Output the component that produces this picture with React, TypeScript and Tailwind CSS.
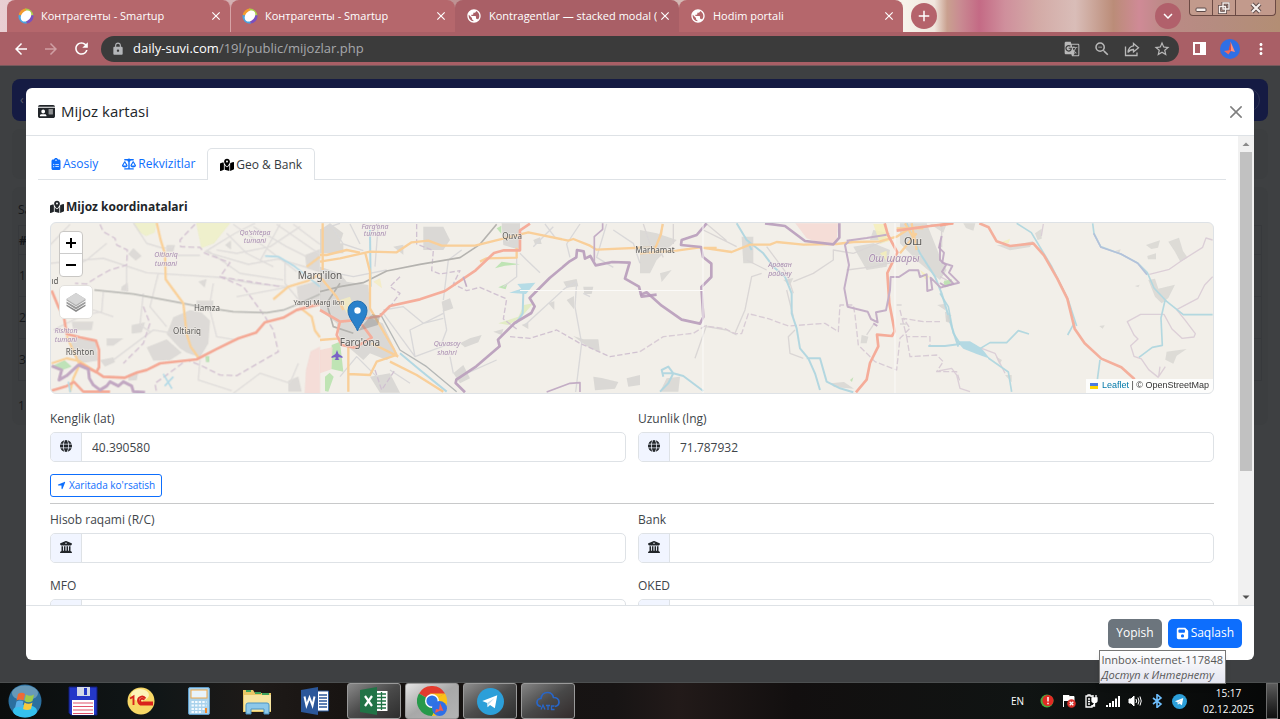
import type { ReactNode } from 'react'
import {
  FaBuildingColumns,
  FaClipboardList,
  FaFloppyDisk,
  FaGlobe,
  FaIdCard,
  FaLocationArrow,
  FaMapLocationDot,
  FaScaleBalanced,
} from 'react-icons/fa6'
import {
  MdAdd,
  MdArrowBack,
  MdArrowForward,
  MdClose,
  MdGTranslate,
  MdKeyboardArrowDown,
  MdLock,
  MdMoreVert,
  MdOutlineZoomOut,
  MdPublic,
  MdRefresh,
  MdStarBorder,
} from 'react-icons/md'

/* ---------- Browser chrome ---------- */

const browserTabs = [
  { title: 'Контрагенты - Smartup', icon: 'smartup', active: false },
  { title: 'Контрагенты - Smartup', icon: 'smartup', active: false },
  { title: 'Kontragentlar — stacked modal (', icon: 'globe', active: true },
  { title: 'Hodim portali', icon: 'globe', active: false },
]

function SmartupIcon() {
  return (
    <svg viewBox="0 0 16 16" className="size-4 shrink-0">
      <path d="M8 .5A7.500 7.500 0 0 0 .8 7L5 9 9 2z" fill="#f39c2d" />
      <path d="M7 .6A7.500 7.500 0 0 1 15.500 8L11 7z" fill="#a8d04c" />
      <path d="M15.500 7A7.500 7.500 0 0 1 8 15.500L10 8z" fill="#7a4fc0" />
      <path d="M9 15.500A7.500 7.500 0 0 1 .5 7L6 8z" fill="#4aa3e0" />
      <ellipse cx="8" cy="8" rx="6.200" ry="4.600" transform="rotate(-50 8 8)" fill="#fff" />
    </svg>
  )
}

function TabStrip() {
  return (
    <div className="flex h-8 shrink-0 bg-[linear-gradient(90deg,#e9cfd3_0%,#b98b8b_40%,#f7f3ea_70.7%,#f0e6dd_73%,#c9a08f_74%,#c98b92_75%,#c46a85_76.5%,#cf8f9c_78.5%,#d3aaa6_81%,#d9bdb8_84%,#bb8c78_87%,#cf8a96_89%,#bb8a86_91%,#b58c80_95%,#b38e74_100%)]">
      <div className="flex min-w-0 flex-1 items-stretch pl-[7px]">
        {browserTabs.map((tab, i) => (
          <div
            key={i}
            className={`flex w-56 min-w-0 items-center rounded-t-lg pl-[11px] pr-1.5 text-[11px] text-white ${
              tab.active ? 'bg-[#a95f66]' : 'bg-[#b5676c]'
            } ${i === 0 ? 'border-r border-[#d6a3a6]' : ''}`}
          >
            {tab.icon === 'smartup' ? <SmartupIcon /> : <MdPublic className="size-4 shrink-0" />}
            <span className="ml-[7px] min-w-0 flex-1 overflow-hidden whitespace-nowrap">{tab.title}</span>
            <button aria-label="Yopish" className="flex size-4 shrink-0 items-center justify-center">
              <MdClose className="size-3.5" />
            </button>
          </div>
        ))}
        <button
          aria-label="Yangi varaq"
          className="ml-2 mt-[3px] flex size-[26px] items-center justify-center rounded-full bg-[#b5636b] text-white"
        >
          <MdAdd className="size-[18px]" />
        </button>
      </div>
      <button
        aria-label="Varaqlar"
        className="mr-2 mt-[3px] flex size-[26px] items-center justify-center rounded-full bg-[#b1606b] text-white"
      >
        <MdKeyboardArrowDown className="size-[18px]" />
      </button>
      <div className="mr-1 flex h-4 w-[87px] divide-x divide-[#6b4a44] rounded-b border border-t-0 border-[#6b4a44] bg-[#c29a8c] text-white">
        <button aria-label="Minimize" className="flex flex-1 items-center justify-center">
          <svg viewBox="0 0 12 12" className="size-3">
            <rect x="1" y="6" width="10" height="3.500" rx="1" fill="#f7efec" stroke="#5d4a48" />
          </svg>
        </button>
        <button aria-label="Restore" className="flex flex-1 items-center justify-center">
          <svg viewBox="0 0 12 12" className="size-3" fill="none">
            <path d="M5 1h6v6H5zM1.500 4.500h6v6h-6z" stroke="#5d4a48" strokeWidth="3" />
            <path d="M5 1h6v6H5zM1.500 4.500h6v6h-6z" stroke="#f7efec" strokeWidth="1.400" />
          </svg>
        </button>
        <button aria-label="Close" className="flex w-[39px] items-center justify-center">
          <svg viewBox="0 0 12 12" className="size-3">
            <path d="M2 2l8 8M10 2l-8 8" stroke="#5d4a48" strokeWidth="4" />
            <path d="M2 2l8 8M10 2l-8 8" stroke="#f7efec" strokeWidth="2.200" />
          </svg>
        </button>
      </div>
    </div>
  )
}

function Toolbar() {
  return (
    <div className="flex h-[34px] shrink-0 items-center border-b border-[#77595c] bg-[#a95f66] pl-3 pr-2.5 text-white">
      <button aria-label="Orqaga" className="mr-3">
        <MdArrowBack className="size-[18px]" />
      </button>
      <button aria-label="Oldinga" className="mr-3 text-[#cf9fa3]">
        <MdArrowForward className="size-[18px]" />
      </button>
      <button aria-label="Yangilash" className="mr-2.5">
        <MdRefresh className="size-[19px]" />
      </button>
      <div className="flex h-[26px] min-w-0 flex-1 items-center rounded-full bg-[#3b3b3b] pl-2.5 pr-2 text-[13px]">
        <MdLock className="mr-2 size-3.5 shrink-0 text-[#b4b6b9]" />
        <div className="min-w-0 flex-1 whitespace-nowrap text-[#a6a8ab]">
          <span className="text-white">daily-suvi.com</span>/19l/public/mijozlar.php
        </div>
        <div className="flex items-center gap-[13px] text-[#b9b9b9]">
          <button aria-label="Tarjima">
            <MdGTranslate className="size-4" />
          </button>
          <button aria-label="Kichraytirish">
            <MdOutlineZoomOut className="size-[18px]" />
          </button>
          <button aria-label="Ulashish">
            <svg viewBox="0 0 16 16" className="size-4" fill="none" stroke="currentColor" strokeWidth="1.300">
              <path d="M1.500 5.500v9h11.500v-3" />
              <path d="M9.500 2.500l5 4.200-5 4.200V8.500C7 8.500 5.300 9.500 4 11.500 4.300 8 6 5.200 9.500 4.800z" />
            </svg>
          </button>
          <button aria-label="Xatcho'p">
            <MdStarBorder className="size-[18px]" />
          </button>
        </div>
      </div>
      <button aria-label="Yon panel" className="ml-3.5 flex h-[13px] w-[13px] border-2 border-white">
        <span className="ml-auto h-full w-1 bg-white" />
      </button>
      <button aria-label="Profil" className="ml-3.5">
        <svg viewBox="0 0 20 20" className="size-5">
          <circle cx="10" cy="10" r="10" fill="#2f6fe6" />
          <path d="M10.500 2.500L15 13l-4-1z" fill="#ff8f7c" />
          <path d="M10.500 2.500L11 12l-3 3z" fill="#e2493e" />
          <path d="M4 12l7-1-2.500 4.500z" fill="#f36a5a" />
        </svg>
      </button>
      <button aria-label="Menyu" className="ml-3">
        <MdMoreVert className="size-[18px]" />
      </button>
    </div>
  )
}

/* ---------- Dimmed page under the modal ---------- */

function PageBehind() {
  return (
    <div aria-hidden="true" className="flex h-full flex-col gap-2 bg-[#3e4042] px-3 pt-[13px] text-xs text-[#15171a]">
      <div className="flex h-[42px] shrink-0 items-center justify-between rounded-lg bg-[#151b43] px-2 text-[#5c5f6a]">
        <span>‹</span>
        <span className="size-6 rounded-full border border-[#2c3152]" />
      </div>
      <div className="h-[50px] shrink-0 rounded-lg bg-[#3c3e40]" />
      <div className="h-[238px] shrink-0 rounded-lg bg-[#3c3e40] px-1.5 pt-2">
        <div className="h-[30px] leading-[30px]">Sa</div>
        <div className="h-[30px] border border-[#37393c] font-bold leading-[30px]">#</div>
        {['1', '2', '3'].map((n) => (
          <div key={n} className="h-[42px] border border-t-0 border-[#37393c] leading-[42px]">
            {n}
          </div>
        ))}
        <div className="h-[50px] leading-[50px]">1</div>
      </div>
    </div>
  )
}

/* ---------- Map ---------- */

type Line = { d: string; c: string; w: number; dash?: string }
type Area = { d: string; c: string }

// every tile is drawn on a grid three times as fine as the map itself
const tiles: { at: string; areas: Area[]; lines: Line[] }[] = [
  {
    at: 'translate(0 130) scale(0.3333)',
    areas: [
      { c: '#d3d1cf', d: 'M520 562L570 540 605 548 630 572 625 640 600 682 560 668 540 655 500 612zM440 652L500 628 545 668 510 690 460 692zM215 575h65l-5 25h-55zM215 622l72 10 7 60-56 8-28-40zM915 375l45-18v70l-40-12zM890 470l70-20v60l-62 20zM385 372l15-18 25 24-18 14zM365 470l18-12 2 26-22-2zM590 512h50v26h-50zM395 585l40-8-10 30-30 4zM320 625h50l-30 22h-20zM865 752l30-12 10 45h-40zM500 345h25l-5 20h-22zM385 735l30-10-5 25-25 2zM300 690l40-8 5 14-30 14zM675 345l18-14v28zM595 455l25-8-6 26z' },
      { c: '#eceebf', d: 'M400 278h70l-6 30-26 10-24-14zM588 278h104l-50 62-38 14z' },
      { c: '#a9dca5', d: 'M157 708l36-18 22 20-32 12zM616 678h12v18h-10z' },
      { c: '#f4d5d0', d: 'M960 650l-28 14-14 56-4 70h46z' },
    ],
    lines: [
      { c: '#dcd9d8', w: 4, d: 'M150 400L250 390 310 385 440 428 660 442 760 460 860 470M400 278L440 340 490 355 520 350M380 405v80M430 490l-10 95 30 20M310 485l-5 60-80 15M600 376h-80M615 365l90-55 60-30M615 365l130 38 90-16 85 25M620 360l100 70 130 20M680 310l60 60 80 40M760 290l100 60 60 30M830 283l130 90M880 283l80 60M700 283l100 72 90 70M900 290l-90 60-100 20-60-10M855 400v60l50 60M150 345l60-62M180 430l80-40 60-50M340 690l120-90 60 10M160 600l120-60 60 20M600 690l-5 60 100 32M710 500l160-30M630 540l20 80 60 10M700 790l80-60 90 30 25-60M640 460l-10 60M475 430l-25 100 50 60M840 283l-60 110' },
      { c: '#cdb9cd', w: 4, dash: '18 9', d: 'M300 283L310 305 345 325 350 345 382 360 380 405 330 420 290 442 260 462 225 460M585 283L540 330 542 350 600 352 615 370 690 398 660 440 730 470 795 560 820 600 835 665 710 737 660 735 600 705 560 690 500 735 465 760 470 790M430 530l20 50-20 60-60 60M660 440l180 30' },
      { c: '#b4b4b0', w: 5, d: 'M283 480L400 492 540 518 600 530 700 545 800 548 850 540 900 520 960 492' },
      { c: '#fbcb8b', w: 7, d: 'M470 278L482 330 495 372 497 448 550 520 560 612 572 650 597 685M155 700l45-15 38 8 52 34M210 785l10-40 18-40M200 618l38 84M905 537l30 23 10 42 15 20M820 508l45-38 60-18 35-20M920 410l40-30' },
      { c: '#f59c86', w: 8, d: 'M155 482L175 530 192 562 200 612 240 622 288 632 297 660 297 712 288 728M155 782L200 768 222 756 250 785H330M238 700L290 727 310 740 375 743 410 728 440 720 480 700 590 688 650 657 715 625 768 608 795 577 850 563 890 540 960 522' },
      { c: '#a8d6e6', w: 5, d: 'M795 378l40 2 50 30 75 60M490 732l26 44M494 768l26-28M205 755l6 32' },
      { c: '#b99bbb', w: 9, d: 'M155 708L185 720 177 750 200 737 235 705 265 718 268 745 280 765 300 780 320 768 330 755 355 768 370 755 395 768 400 785 435 787' },
    ],
  },
  {
    at: 'translate(320 210) scale(0.3333)',
    areas: [
      { c: '#d0cfcd', d: 'M0 170l60 20 20 25 65 10 8 100 35 15 42 90-30 20-50-20-20 20-70-60-10-50-50-40zM0 60l30-20 40 30-20 60H0zM310 50h60l20 40-20 30h-60zM545 40h55v80l-50-15zM150 500l60-10 30 58h-60zM365 275l25-10 10 30-30 10zM420 400l30-15 35-10-10 22-40 15zM400 490l30-25 20 40-30 15zM730 215l40-8 5 22-35 4zM685 280l18-6v26zM740 270l22-12v40zM790 230h30l-5 22h-22zM760 378l30 10 45 0 5 40-40-20zM820 500l25 4 50 12-10 20-60 5zM920 505l40-10v30l-35 5zM605 345l20-8v20zM520 365l30-8-5 18zM20 100h50v30H20zM220 110l30-6v30zM640 90l20-8 5 20h-20z' },
      { c: '#aadfa0', d: 'M525 175l20-20 55 8-45 4zM535 232l28-12-6 18zM530 55l14-8v24zM15 500l14-12 12 12-16 45-10-2zM35 405l25-10 10 90-36-8z' },
      { c: '#f5d5cf', d: 'M0 420l38-8-4 66-34 12z' },
      { c: '#9ed3e4', d: 'M592 222l54-4-28 34-50-4 36-12z' },
      { c: '#dbeab6', d: 'M612 285l28-5-35 40-40 25-30-5 60-20z' },
      { c: '#f3ebbb', d: 'M60 270l30-10 10 30-20 20zM160 215l20-10 6 30z' },
    ],
    lines: [
      { c: '#d5d4d6', w: 4, d: 'M0 60l60-20M30 42l40 60 60 20M90 42l30 60M0 180l100 20 100-20M165 170l10-130M190 300l60-10 60 50 60-15M190 310l95 130 95-35M370 300l10 60-15 40M285 440l-15-80 100-50M370 270l15-120 40-30M590 140v60l-40 30M440 490l90-40M600 130l20 20 40 38M640 110l60-60M675 42l30 40M770 220l-5 70 20 110-18 146M615 345l120-110 35-20M790 250l20 10M780 42l-40 60 10 40M860 42l-30 100 50 30M400 490l-10-50M210 480l60 40M60 500l50-60 60 60M880 60l60 40 20 60' },
      { c: '#cbbacd', w: 4, dash: '16 7', d: 'M290 42v60l50 20-5 60 25 10 60-10-20 40 40 20 40-10 80 35-10 60 40 30M240 200l-30 30 30 20-30 40M570 380l60 5 80-25 70 40 90 40 90-15M165 480l20 60 40-60' },
      { c: '#aaa8a5', w: 5, d: 'M0 245l60-15 70-12 70-35 100-20 120-20 60-40 50-60M60 220l-40 60 20 70 60 20' },
      { c: '#a8d4e2', w: 6, d: 'M150 60l2 170M610 250l-2 60-20 30M240 430l60 50 80 65' },
      { c: '#aaaeae', w: 4, d: 'M180 310l60 110 80 50 90 75' },
      { c: '#fbc98b', w: 7, d: 'M0 155l60-10 90-20 80 2 45-30 50-5 40 15h100l160-40 120 25 15-5 50 20 20 12 180-8M0 135l20 0 60-15 40 8M8 40v140M135 125l15 60v110l70 120 10 20-60 20-20 40-65-3M235 440l-80-40M0 390l60-5M85 410v135M210 455l80 40 80 50M0 200l50 60 20 40M480 155l20-10 90-2v-30' },
      { c: '#f6a28d', w: 8, d: 'M0 300l60 35 50-5 70-12 30-30 90-20 75-25 92-62 55-52 30-8h48v-60l30-20M60 335l-10 40 15 30 40 8 50-30-30-40' },
      { c: '#b497b8', w: 8, d: 'M435 547l-28-28 2-10 60-40 70-60-5-20 50-50 50-30 10-20-15-25 30-30 30-30 60-50 20-12 2-22 20 4 4 22 16-8 16 28 50-10 52 2-14 48 42 24 8 30 45-6' },
      { c: '#bba1bf', w: 5, d: 'M823 155v-75l25-22v-18M680 546l70-26 30-2v28M430 200l10 30' },
    ],
  },
  {
    at: 'translate(640 210) scale(0.3333)',
    areas: [
      { c: '#d2d1cf', d: 'M0 60l50 10 60 20-60 60-20 40H0zM60 190l35-10-30 36zM305 80h35v80h-30zM640 110l60-10 50 20-10 50-60 10zM780 40h80l40 100 20 40-20 30-60-50-60-60zM700 60l50 10-20 20h-40zM430 210l30-6-10 22zM80 505l40-5-5 45H60zM665 375l20 5-5 20h-18zM572 520l40-4 30 20-60-5zM892 285l24-4v20zM915 305l15 4v30l-12-4zM870 42l50 0-10 26z' },
      { c: '#f5d6d0', d: 'M466 40h128l-4 55-30 10-60-20z' },
      { c: '#f5efb2', d: 'M700 42h40l10 50-30 10zM840 180l30 20-15 8zM720 130l20-8v30z' },
      { c: '#b3dca6', d: 'M912 212l24-4-6 16-16 4zM630 510l10-8-4 14z' },
    ],
    lines: [
      { c: '#d6d2d2', w: 4, d: 'M190 60l40 20 60 30M200 42l60 50M380 110l60 80 20 60M460 215l60-25 60-40v-30l60 10M365 190l-30 10-20 100-30 70M200 350l60 10 30 15M200 345l-35 100M465 360l-20 20 5 50 40 15M70 42l-20 60 20 40M100 42v60M10 42l30 90M620 180l80-10 90-20M640 130l100-40M320 150l60 30M680 375l20-30M905 42v70M780 342h20M770 285h15M440 240l20 80' },
      { c: '#d4c6d2', w: 4, dash: '18 7', d: 'M0 425l70-45 90-10 35-22 60 8 30 15 20 0 20-60 60 15 60 22 110-8 40 25 5-80h40l5 30 10 90 50 50 65 25 10-95 30-30-20-30 60 10 50 0M780 300l20 80h70v30M800 380l10 60 80-5 20 20-20 30 60 0 10 30' },
      { c: '#a9d3df', w: 6, d: 'M290 40l30 50 50 40 30 40 35 30 20 50v60l15 45 10 60 25 30 20 45 15 50M500 445l40 0 20 70 40 20 40 12M70 500l-5-20 20-10 15 20-15 30-25 25M70 490h30l30 8 60 45M800 40l40 90 45 70 20 50 30 100 20 60M865 408l50 0 45-6M325 100l10 20' },
      { c: '#fbca8c', w: 7, d: 'M0 130l110-8 70-10 95 14 55-22 60 0 20-8 80 8 100-2 50-6 80-2 50-14 40-25 40-5M68 42l-5 30-20 50M795 40l35 60M815 40l15 80M770 55h80M780 130l50-60M190 114h40' },
      { c: '#f6a08b', w: 8, d: 'M734 40l10 35 28 52-30 62 6 90 16 85-8 14-45-4 4 35-25 50-10 50-32 38M770 62l100-14 70-8' },
      { c: '#b598b9', w: 8, d: 'M200 40l-30 35-45 15-2 15 60 6 6 30 25 20v40l-30 30 6 90-10 20-55-12-60-42-45-40-20 8M375 40l60 8 60 45 85 10 18-20V40' },
      { c: '#bda4c1', w: 6, d: 'M630 90l-15 15 12 60-14 70 10 55 60 15 10 22 20 10-5-30 30-6 12-60 2-40 25 0 30-20h28l5 20 20-8 2 50 15-5-5-35 30 30 15-5 40-10-30-30 10-20-30-10 5-30-15-15 8-35M700 340l12 8M620 92l60-8 60-10' },
    ],
  },
  {
    at: 'translate(940 130) scale(0.3333)',
    areas: [
      { c: '#d4d2cf', d: 'M70 280h36l-6 22-22-8zM170 345l60 0 50-12-10 18-60 10zM285 310l20-14 0 30-12 4zM618 345l42-14-6 22-20 4zM622 378l26-8v18h-24zM685 335l32-12 12 40 14 20-22 12-16-30zM625 450l20-4 10 30 50-12-20 40-20 16-20-20zM680 665l60-8-30 20-10 24-24-12zM478 588l16-2-6 10zM585 468l14-4-4 8zM527 362l15-4-4 10zM20 555l14 0-4 22-12-4zM168 680l18 10-8 14zM195 735l20 0 0 22z' },
      { c: '#f2efb5', d: 'M180 338l30-12-4 14z' },
      { c: '#9bd0e0', d: 'M50 634l40 0 34 20 26 32-40-14-40-16z' },
      { c: '#bde0b0', d: 'M10 456l22-4-4 14-14 4z' },
    ],
    lines: [
      { c: '#d8c9d4', w: 4, d: 'M628 433l60-15 40-28 60-38 10-28 20 6M818 440l-24 25-20 40-64 34 26 32 30 40-4 10-36 4-30-28-24-44-70 0-40 22 20 40 12 12-22 20 10 32 22 8 22 32 30 24M310 282l-6 36M90 785l-30-10-10-40-15-20-40 8M125 655l40 15 30 60M660 710l-4 30 20-30M0 440l20 10' },
      { c: '#a9d4de', w: 5, d: 'M458 280l4 30 20 40 60 22 50 26 30 30 20 46 38 40 50 40h88M675 512l-12 52 4 82-30 6-40 30M230 280l44 28 60 100 50 100 26 80M405 575l-22 40M120 656l30-18h50l35-36 32 10M0 490l25 40 15 80 20 30M145 684l60 42 10 60M480 690l-8 60' },
      { c: '#a9b9d8', w: 5, d: 'M461 310l22 42 60 20 50 28 28 34' },
      { c: '#f5a48f', w: 8, d: 'M118 280l28 12 24 42 40 14 70-8 32 36 40 70 30 60 22 90 30 44 50 46 60 26 40 36M0 286l40-8' },
      { c: '#bda3c0', w: 6, d: 'M0 340l0 50 18 15-12 20 34 36-24 8-16-10' },
    ],
  },
]

const mapLabels = [
  { x: 320, y: 279, text: "Marg'ilon", size: 10, kind: 'town' },
  { x: 319, y: 305, text: 'Yangi Marg ilon', size: 7, kind: 'town' },
  { x: 360, y: 346, text: "Farg'ona", size: 10, kind: 'town' },
  { x: 512, y: 239, text: 'Quva', size: 8, kind: 'town' },
  { x: 655, y: 253, text: 'Marhamat', size: 8, kind: 'town' },
  { x: 913, y: 245, text: 'Ош', size: 11, kind: 'town' },
  { x: 207, y: 311, text: 'Hamza', size: 8, kind: 'town' },
  { x: 187, y: 334, text: 'Oltiariq', size: 8, kind: 'town' },
  { x: 80, y: 355, text: 'Rishton', size: 8, kind: 'town' },
  { x: 55, y: 284, text: 'ıd', size: 8, kind: 'town' },
  { x: 255, y: 235, text: "Qo'shtepa", size: 7, kind: 'area' },
  { x: 255, y: 243, text: 'tumani', size: 7, kind: 'area' },
  { x: 166, y: 257, text: 'Oltiariq', size: 7, kind: 'area' },
  { x: 166, y: 266, text: 'tumani', size: 7, kind: 'area' },
  { x: 66, y: 333, text: 'Rishton', size: 7, kind: 'area' },
  { x: 66, y: 342, text: 'tumani', size: 7, kind: 'area' },
  { x: 375, y: 229, text: "Farg'ona", size: 7, kind: 'area' },
  { x: 375, y: 236, text: 'tumani', size: 7, kind: 'area' },
  { x: 447, y: 346, text: 'Quvasoy', size: 7, kind: 'area' },
  { x: 447, y: 355, text: 'shahri', size: 7, kind: 'area' },
  { x: 780, y: 267, text: 'Араван', size: 7, kind: 'area' },
  { x: 780, y: 276, text: 'району', size: 7, kind: 'area' },
  { x: 894, y: 262, text: 'Ош шаары', size: 10, kind: 'area' },
]

function MapView() {
  return (
    <div className="relative h-[172px] overflow-hidden rounded-md border border-[#dee2e6] bg-[#f2efe9]">
      <svg
        viewBox="51 222 1162 172"
        preserveAspectRatio="xMidYMid slice"
        className="block size-full"
        role="img"
        aria-label="Xarita"
      >
        {tiles.map((tile) => (
          <g key={tile.at} transform={tile.at} opacity="0.85">
            {tile.areas.map((a) => (
              <path key={a.d} d={a.d} fill={a.c} opacity="0.85" />
            ))}
            {tile.lines.map((l) => (
              <path
                key={l.d}
                d={l.d}
                fill="none"
                stroke={l.c}
                strokeWidth={l.w}
                strokeDasharray={l.dash}
                strokeLinejoin="round"
              />
            ))}
          </g>
        ))}
        <path d="M703 222v172M895 222v172M520 290.500h183" stroke="#fbfaf8" strokeWidth="1" />
        <path d="M337 350l1.500 4 4 2.500v1.500l-4-1v2l1 1h-5l1-1v-2l-4 1v-1.500l4-2.500z" fill="#7b62c6" />
        {mapLabels.map((l) => (
          <text
            key={`${l.x}-${l.y}`}
            x={l.x}
            y={l.y}
            fontSize={l.size}
            textAnchor="middle"
            fill={l.kind === 'town' ? '#5b5a58' : '#a88db1'}
            stroke="#f2efe9"
            strokeWidth="1.500"
            strokeOpacity="0.6"
            paintOrder="stroke"
            fontStyle={l.kind === 'town' ? 'normal' : 'italic'}
            fontFamily="'Noto Sans', sans-serif"
          >
            {l.text}
          </text>
        ))}
        {/* marker with its shadow */}
        <path d="M358 331l14-17 8 2-2 9z" fill="#777" opacity="0.35" />
        <path
          d="M357.500 331c-2-6-9.500-13-9.500-20.500a9.500 9.500 0 0 1 19 0c0 7.500-7.500 14.500-9.500 20.500z"
          fill="#2a81cb"
          stroke="#1f6caf"
        />
        <circle cx="357.500" cy="310.500" r="3.200" fill="#fff" />
      </svg>

      <div className="absolute left-2 top-2 flex flex-col items-start gap-2">
        <div className="flex flex-col overflow-hidden rounded-sm border border-[#c9c7c4] bg-white text-black">
          <button aria-label="Yaqinlashtirish" className="flex size-[22px] items-center justify-center border-b border-[#ccc]">
            <svg viewBox="0 0 10 10" className="size-2.5">
              <path d="M0 5h10M5 0v10" stroke="currentColor" strokeWidth="2" />
            </svg>
          </button>
          <button aria-label="Uzoqlashtirish" className="flex size-[22px] items-center justify-center">
            <svg viewBox="0 0 10 10" className="size-2.5">
              <path d="M0 5h10" stroke="currentColor" strokeWidth="2" />
            </svg>
          </button>
        </div>
        <button
          aria-label="Qatlamlar"
          className="flex size-[34px] items-center justify-center rounded-[5px] border border-[#e3e1dd] bg-white"
        >
          <svg viewBox="0 0 22 20" className="h-5 w-[22px]">
            <path d="M1.500 12.500V14L11 20l9.500-6v-1.500L11 18z" fill="#8a8a8a" />
            <path d="M1.500 9.500v2L11 17.500l9.500-6v-2L11 15z" fill="#9b9b9b" />
            <path d="M1.500 7v1.500L11 14.500l9.500-6V7L11 1z" fill="#b0b0b0" />
            <path d="M1.500 7L11 13 20.500 7 11 1z" fill="#d6d6d6" />
          </svg>
        </button>
      </div>

      <div className="absolute bottom-0 right-0 flex h-3.5 items-center gap-1 bg-white/85 px-1 font-['Liberation_Sans',Arial,sans-serif] text-[9px] text-[#333]">
        <svg viewBox="0 0 8 6" className="h-1.5 w-2">
          <path d="M0 0h8v3H0z" fill="#4c7be1" />
          <path d="M0 3h8v3H0z" fill="#ffd500" />
        </svg>
        <span>
          <a href="#leaflet" className="text-[#0078a8]">
            Leaflet
          </a>{' '}
          | © OpenStreetMap
        </span>
      </div>
    </div>
  )
}

/* ---------- Modal ---------- */

function Field({ id, label, icon, value }: { id: string; label: string; icon?: ReactNode; value?: string }) {
  return (
    <div className="min-w-0">
      <label htmlFor={id} className="mb-1 block text-xs leading-[18px] text-[#40454a]">
        {label}
      </label>
      <div className="flex h-[30px] overflow-hidden rounded-[5px] border border-[#dee2e6] bg-white">
        <span className="flex w-[31px] shrink-0 items-center justify-center border-r border-[#dee2e6] bg-[#f1f5ff] pb-0.5 text-xs text-[#212529]">
          {icon}
        </span>
        <input
          id={id}
          type="text"
          defaultValue={value}
          className="min-w-0 flex-1 bg-transparent px-2.5 pt-0.5 text-xs text-[#40454a] outline-none"
        />
      </div>
    </div>
  )
}

function Scrollbar() {
  return (
    <div aria-hidden="true" className="flex w-4 shrink-0 flex-col items-center bg-[#f1f1f1]">
      <svg viewBox="0 0 16 16" className="size-4 shrink-0">
        <path d="M4.500 10L8 6.500 11.500 10z" fill="#8a8a8a" />
      </svg>
      <div className="flex w-3 flex-1 flex-col">
        <div className="h-[73%] bg-[#c1c1c1]" />
      </div>
      <svg viewBox="0 0 16 16" className="size-4 shrink-0">
        <path d="M4.500 6.500L8 10l3.500-3.500z" fill="#505050" />
      </svg>
    </div>
  )
}

function CustomerModal() {
  return (
    <section
      role="dialog"
      aria-labelledby="modal-title"
      className="absolute inset-x-[26px] inset-y-[22px] flex flex-col overflow-hidden rounded-md bg-white"
    >
      <header className="flex h-12 shrink-0 items-center justify-between border-b border-[#dee2e6] px-3">
        <h1 id="modal-title" className="flex items-center gap-1.5 text-[15px] text-[#212529]">
          <FaIdCard className="size-[17px]" />
          Mijoz kartasi
        </h1>
        <button aria-label="Yopish" className="text-[#7f7f7f]">
          <svg viewBox="0 0 14 14" className="size-3">
            <path d="M1 1l12 12M13 1L1 13" stroke="currentColor" strokeWidth="1.800" strokeLinecap="round" />
          </svg>
        </button>
      </header>

      <div className="flex min-h-0 flex-1">
        <div className="min-w-0 flex-1 overflow-hidden px-3 pt-3">
          <div role="tablist" className="flex h-8 border-b border-[#dee2e6] text-xs text-[#0d6efd]">
            <button role="tab" aria-selected="false" className="flex items-center gap-px px-3">
              <FaClipboardList className="size-3" />
              Asosiy
            </button>
            <button role="tab" aria-selected="false" className="flex items-center gap-0.5 px-3">
              <FaScaleBalanced className="size-3.5" />
              Rekvizitlar
            </button>
            <button
              role="tab"
              aria-selected="true"
              className="-mb-px flex items-center gap-0.5 rounded-t-[5px] border border-b-0 border-[#dee2e6] bg-white px-3 text-[#343a40]"
            >
              <FaMapLocationDot className="size-3.5 text-black" />
              Geo &amp; Bank
            </button>
          </div>

          <div className="px-3 pt-4">
            <h2 className="mb-1 flex items-center gap-0.5 text-xs font-bold leading-[22px] text-[#212529]">
              <FaMapLocationDot className="size-3.5" />
              Mijoz koordinatalari
            </h2>
            <MapView />

            <div className="mt-4 grid grid-cols-2 gap-x-3">
              <Field id="lat" label="Kenglik (lat)" icon={<FaGlobe />} value="40.390580" />
              <Field id="lng" label="Uzunlik (lng)" icon={<FaGlobe />} value="71.787932" />
            </div>
            <button className="mt-3 flex h-[23px] items-center gap-[3px] rounded-[3px] border border-[#0d6efd] px-1.5 text-[10px] text-[#0d6efd]">
              <FaLocationArrow className="size-[9px]" />
              Xaritada ko'rsatish
            </button>
            <hr className="mb-[7px] mt-1.5 border-[#c8c9ca]" />
            <div className="grid grid-cols-2 gap-x-3 gap-y-3.5">
              <Field id="account" label="Hisob raqami (R/C)" icon={<FaBuildingColumns />} />
              <Field id="bank" label="Bank" icon={<FaBuildingColumns />} />
              <Field id="mfo" label="MFO" />
              <Field id="oked" label="OKED" />
            </div>
          </div>
        </div>
        <Scrollbar />
      </div>

      <footer className="flex h-[55px] shrink-0 items-center justify-end gap-1.5 border-t border-[#dee2e6] px-3 text-xs text-white">
        <button className="h-[29px] rounded-[5px] bg-[#6c757d] px-2">Yopish</button>
        <button className="flex h-[29px] items-center gap-0.5 rounded-[5px] bg-[#0d6efd] px-2">
          <FaFloppyDisk className="size-[13px]" />
          Saqlash
        </button>
      </footer>
    </section>
  )
}

/* ---------- Windows taskbar ---------- */

function TelegramIcon({ className }: { className: string }) {
  return (
    <svg viewBox="0 0 28 28" className={className}>
      <circle cx="14" cy="14" r="14" fill="#2c9fd9" />
      <path d="M5.500 13.500L21 7.500l-2.500 13.500-5-3.500-2.500 2.500-.5-4.500z" fill="#fff" />
      <path d="M10.500 15.500L18 10.500l-6 6.500-1 3z" fill="#b9d9ec" />
    </svg>
  )
}

const pinned: { name: string; icon: ReactNode }[] = [
  {
    name: 'Total Commander',
    icon: (
      <svg viewBox="0 0 30 30" className="size-[30px]">
        <path d="M1 1h28v28H3l-2-2z" fill="#2438c8" stroke="#101c78" />
        <path d="M9 1h13v9H9z" fill="#d3d9e6" />
        <path d="M16 2h3v7h-3z" fill="#2438c8" />
        <path d="M4 14h22v15H4z" fill="#fff" />
        <path d="M5 17h20M5 20.500h20M5 24h20M5 27.500h20" stroke="#e0526a" strokeWidth="1.200" />
      </svg>
    ),
  },
  {
    name: '1C',
    icon: (
      <svg viewBox="0 0 28 28" className="size-7">
        <circle cx="14" cy="14" r="13.500" fill="#f7d866" />
        <ellipse cx="13" cy="8" rx="9" ry="6" fill="#fdf3b8" />
        <path d="M3 11.500l3.500-2V18M18.500 11.500a4 4 0 1 0-2.500 6h10M17 13a2 2 0 1 0-1 2.500h10" fill="none" stroke="#d9231c" strokeWidth="1.900" />
      </svg>
    ),
  },
  {
    name: 'Calculator',
    icon: (
      <svg viewBox="0 0 22 28" className="h-7 w-[22px]">
        <rect x=".5" y=".5" width="21" height="27" rx="1.500" fill="#a9d2ec" stroke="#5e9cc8" />
        <rect x="3" y="3" width="16" height="8" fill="#e9f4fb" stroke="#f0a848" />
        <path d="M3.500 15h15M3.500 18.500h15M3.500 22h15M3.500 25h11" stroke="#f4fafe" strokeWidth="2" strokeDasharray="2.400 1.200" />
        <path d="M17 21h2v5h-2z" fill="#f08a2c" />
      </svg>
    ),
  },
  {
    name: 'Explorer',
    icon: (
      <svg viewBox="0 0 30 28" className="h-7 w-[30px]">
        <path d="M1 3h10l2 3h16v19H1z" fill="#e9c765" />
        <path d="M4 4h5M13 6h6M20 7h7" stroke="#3fa35c" strokeWidth="2" />
        <path d="M2 8h27v16H2z" fill="#f7e5a0" />
        <path d="M4 27V18q0-2 2-2h19q2 0 2 2v9h-5v-5H9v5z" fill="#8cc8ea" stroke="#4b94c4" />
      </svg>
    ),
  },
  {
    name: 'Word',
    icon: (
      <svg viewBox="0 0 28 28" className="size-7">
        <path d="M14 4h13.500v20H14z" fill="#fff" stroke="#2b579a" />
        <path d="M18 8h8M18 11h8M18 14h8M18 17h8M18 20h8" stroke="#2b579a" strokeWidth="1.300" />
        <path d="M0 3l17-3v28L0 25z" fill="#2b579a" />
        <path d="M3.500 9.500l2 9 3-8 3 8 2-9" fill="none" stroke="#fff" strokeWidth="2" />
      </svg>
    ),
  },
]

const running: { name: string; look: string; icon: ReactNode }[] = [
  {
    name: 'Excel',
    look: 'bg-linear-to-br from-[#8a8a8a] via-[#4a4a4a] to-[#2e2e2e]',
    icon: (
      <svg viewBox="0 0 28 28" className="size-7">
        <path d="M14 4h13.500v20H14z" fill="#fff" />
        <path d="M17 7h9M17 10.500h9M17 14h9M17 17.500h9M17 21h9M21.500 5v18" stroke="#217346" strokeWidth="1.300" />
        <path d="M0 3l17-3v28L0 25z" fill="#217346" />
        <path d="M5 9l7 10M12 9L5 19" stroke="#fff" strokeWidth="2.200" />
      </svg>
    ),
  },
  {
    name: 'Chrome',
    look: 'bg-linear-to-br from-[#e4e4e4] via-[#a8a8a8] to-[#b4b4b4]',
    icon: (
      <svg viewBox="0 0 30 30" className="size-[30px]">
        <path d="M15 15L2 7.500A15 15 0 0 1 28 7.500z" fill="#e33b2e" />
        <path d="M15 15L2 7.500A15 15 0 0 0 15 30l6-11z" fill="#27994a" />
        <path d="M15 15L28 7.500A15 15 0 0 1 15 30l6.500-12z" fill="#fbc116" />
        <path d="M13 7.500h15L15 15z" fill="#fbc116" />
        <circle cx="15" cy="15" r="7" fill="#fff" />
        <circle cx="15" cy="15" r="5.600" fill="#2f74e3" />
        <circle cx="22.500" cy="22.500" r="7.500" fill="#2f6fe6" />
        <path d="M23 17l3.500 8-3-.5-5.500 2.500 1-4 3 .5z" fill="#ee5b50" />
      </svg>
    ),
  },
  {
    name: 'Telegram',
    look: 'bg-linear-to-br from-[#8f8f8f] via-[#4c4c4c] to-[#303030]',
    icon: <TelegramIcon className="size-[27px]" />,
  },
  {
    name: 'ATC',
    look: 'bg-linear-to-br from-[#858585] via-[#484848] to-[#332c2c]',
    icon: (
      <svg viewBox="0 0 24 20" className="h-5 w-6" fill="none" stroke="#2866c8" strokeWidth="1.700">
        <path d="M5 15.500C2.500 15 1 13.500 1 11.500 1 9 3 7.500 5 7.500 5.500 4 8 1.500 11.500 1.500c3.500 0 5.500 2.500 6 5 3 0 5.500 1.800 5.500 4.800 0 2-1.500 3.700-4 4.200" />
        <path d="M5 18.500l2-4.500 2 4.500M10 14.500h4M12 14.500v4.500M18.500 15h-3v3.500h3" strokeWidth="1.300" />
      </svg>
    ),
  },
]

function Tray() {
  return (
    <div className="flex items-center">
      <span className="mr-4 text-[10px]">EN</span>
      <div className="mr-4 flex items-center gap-2">
        <svg viewBox="0 0 14 14" className="size-3.5">
          <circle cx="7" cy="7" r="6.500" fill="#4ba83c" />
          <circle cx="8" cy="6.500" r="5.500" fill="#e02a24" />
          <path d="M8 3v4.500M8 8.700v1.500" stroke="#fff" strokeWidth="1.500" />
        </svg>
        <svg viewBox="0 0 14 14" className="size-3.5">
          <path d="M1.500 1v12M2 1.500h5l1 1h4v5H8l-1-1H2z" stroke="#fff" fill="#fff" />
          <circle cx="9.500" cy="9.500" r="4.300" fill="#d9302a" />
          <path d="M7.700 7.700l3.600 3.600M11.300 7.700l-3.600 3.600" stroke="#fff" strokeWidth="1.300" />
        </svg>
        <svg viewBox="0 0 14 14" className="size-3.5" fill="none" stroke="#fff" strokeWidth="1.300">
          <path d="M8 3V2H6V1H4v1H2v11h6V11M4 5h2M4 7.500h2M4 10h2" />
          <path d="M9 1v3M12 1v3M8 4h5v2.500q0 2-2.500 2T8 6.500zM10.500 8.500V12H8" fill="#fff" />
        </svg>
        <svg viewBox="0 0 14 14" className="size-3.5" fill="#fff">
          <path d="M0 11h2v2H0zM3 9h2v4H3zM6 7h2v6H6zM9 4.500h2V13H9zM12 2h2v11h-2z" />
        </svg>
        <svg viewBox="0 0 14 14" className="size-3.5" fill="none" stroke="#fff">
          <path d="M1 5h2l3-3v10L3 9H1z" fill="#fff" />
          <path d="M8 5q1.200 2 0 4M10 3.500q2 3.500 0 7M12 2.500q2.500 4.500 0 9" />
        </svg>
        <svg viewBox="0 0 14 14" className="size-3.5" fill="none" stroke="#6fc0ff" strokeWidth="1.600">
          <path d="M3 4l8 6-4 3.500V.5L11 4l-8 6" />
        </svg>
        <TelegramIcon className="size-[15px]" />
      </div>
      <div className="mr-3 text-center text-[10px] leading-4">
        <div>15:17</div>
        <div>02.12.2025</div>
      </div>
    </div>
  )
}

function Taskbar() {
  return (
    <div className="relative flex h-[37px] shrink-0 border-t border-[#4c4f50] bg-[linear-gradient(90deg,#0b0d0d_0%,#101617_12%,#1e1a18_20%,#15110f_30%,#171414_48%,#221a19_53%,#120f0f_62%,#101413_80%,#060707_100%)] text-white">
      <button aria-label="Start" className="flex w-[54px] items-center pl-2">
        <svg viewBox="0 0 34 34" className="size-[34px]">
          <circle cx="17" cy="17" r="16.500" fill="#2b6f9f" />
          <ellipse cx="17" cy="27" rx="12" ry="6.500" fill="#35c0ee" />
          <ellipse cx="17" cy="9" rx="13" ry="7.500" fill="#8fb6c9" opacity="0.600" />
          <path d="M10 10q4-2.500 7 0l-1.500 6.500q-3.500-2-7 0z" fill="#ee6a35" />
          <path d="M18 10.500q4 2.500 8 0L24.500 17q-4 2.500-8 0z" fill="#9ccb4a" />
          <path d="M8.500 17.500q3.500-2 7 0L14 24q-3-2-7 0z" fill="#59aee6" />
          <path d="M16.500 18.500q4 2.500 8 0L23 25q-4 2-8 0z" fill="#f8c93c" />
        </svg>
      </button>
      {pinned.map((app) => (
        <button key={app.name} aria-label={app.name} className="flex w-[58px] items-center justify-center">
          {app.icon}
        </button>
      ))}
      <div className="ml-[3px] flex flex-1 gap-1">
        {running.map((app) => (
          <button
            key={app.name}
            aria-label={app.name}
            className={`flex w-[54px] items-center justify-center rounded-[3px] border border-[#9a9a9a] ${app.look}`}
          >
            {app.icon}
          </button>
        ))}
      </div>
      <Tray />
      <button
        aria-label="Desktop"
        className="mr-0.5 w-3 border border-[#6d6d6d] bg-linear-to-b from-[#5c5c5c] to-[#101010]"
      />

      <div
        role="tooltip"
        className="absolute bottom-[35px] right-[54px] whitespace-nowrap border border-[#767676] bg-linear-to-b from-white to-[#e4e5f0] px-0.5 py-px text-[11px] leading-[15px] text-[#575757] shadow-md"
      >
        <div>Innbox-internet-117848</div>
        <div className="italic">Доступ к Интернету</div>
      </div>
    </div>
  )
}

export default function App() {
  return (
    <div className="flex h-screen flex-col overflow-hidden bg-[#3e4042] font-['Open_Sans','Noto_Sans',sans-serif]">
      <TabStrip />
      <Toolbar />
      <main className="relative min-h-0 flex-1">
        <PageBehind />
        <CustomerModal />
      </main>
      <Taskbar />
    </div>
  )
}
